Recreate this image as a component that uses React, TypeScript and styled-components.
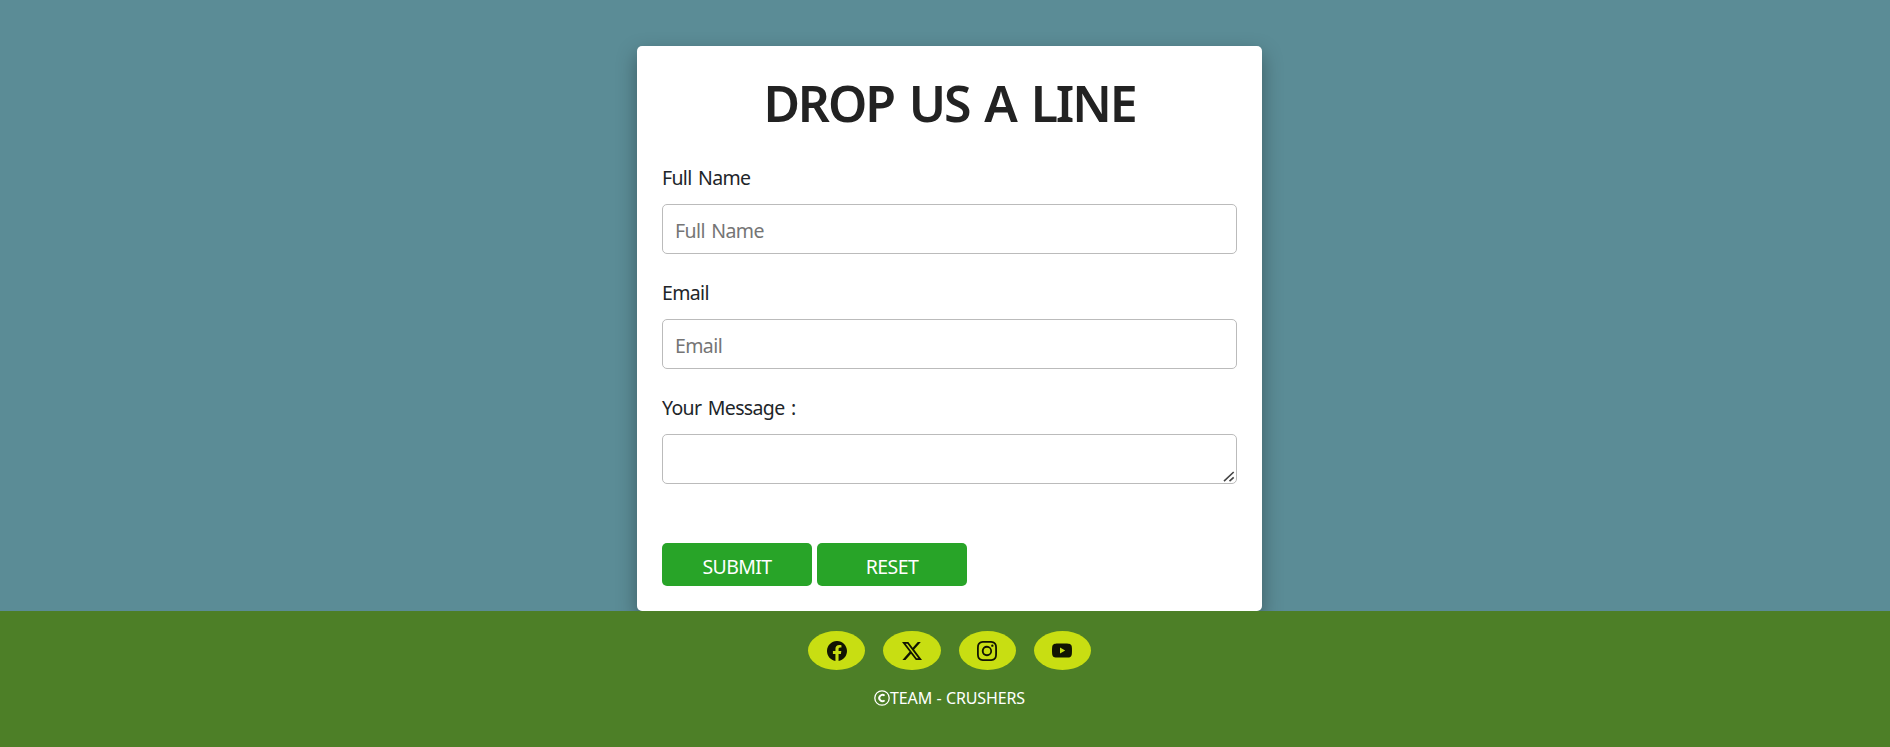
import React from "react";
import styled, { createGlobalStyle } from "styled-components";
import { BsFacebook, BsInstagram, BsTwitterX, BsYoutube } from "react-icons/bs";

const GlobalStyle = createGlobalStyle`
  *, *::before, *::after { box-sizing: border-box; }
  body {
    margin: 0;
    background: #5b8c96;
    color: #212529;
    font-family: "Segoe UI", "Noto Sans", "Open Sans", sans-serif;
  }
`;

const Page = styled.div`
  display: flex;
  flex-direction: column;
  height: 747px;
  overflow: hidden;
`;

const Main = styled.main`
  flex: 0 0 611px;
  display: flex;
  justify-content: center;
  padding: 46px 0 0 9px;
  overflow: hidden;
`;

const Card = styled.form`
  width: 625px;
  height: 565px;
  padding: 25px;
  background: #fff;
  border-radius: 5px;
  box-shadow: 0 8px 20px rgba(0, 0, 0, 0.35);
`;

const Title = styled.h1`
  margin: 0 0 20px;
  height: 65px;
  line-height: 64px;
  font-size: 50px;
  font-weight: 600;
  letter-spacing: -2.1px;
  word-spacing: 4px;
  text-align: center;
  color: #222;
  white-space: nowrap;
`;

const Field = styled.div`
  display: flex;
  flex-direction: column;
  height: 115px;
`;

const Label = styled.label`
  height: 48px;
  line-height: 44px;
  font-size: 19.5px;
  letter-spacing: -0.65px;
  word-spacing: 2px;
`;

const Input = styled.input`
  height: 50px;
  padding: 3px 12px 0 12px;
  border: 1px solid #bbb;
  border-radius: 5px;
  font: inherit;
  font-size: 19.5px;
  letter-spacing: -0.6px;
  word-spacing: 2px;
  outline: none;
  &::placeholder { color: #757575; opacity: 1; }
`;

const MessageBox = styled.div`
  position: relative;
  display: flex;
`;

const TextArea = styled.textarea`
  flex: 1;
  height: 50px;
  padding: 10px 12px;
  border: 1px solid #bbb;
  border-radius: 5px;
  font: inherit;
  font-size: 20px;
  resize: none;
  overflow: hidden;
  outline: none;
`;

const Grip = styled.svg`
  position: absolute;
  right: 2px;
  bottom: 2px;
  pointer-events: none;
`;

const Actions = styled.div`
  display: flex;
  gap: 5px;
  margin-top: 42px;
`;

const Button = styled.button`
  width: 150px;
  height: 43px;
  padding: 5px 0 0;
  border: 0;
  border-radius: 5px;
  background: #28a428;
  color: #fff;
  font: inherit;
  font-size: 19.5px;
  line-height: 30px;
  letter-spacing: -0.6px;
`;

const Footer = styled.footer`
  flex: 1;
  display: flex;
  flex-direction: column;
  align-items: center;
  padding: 20px 0 0 9px;
  background: #4d7f27;
  color: #fff;
`;

const Socials = styled.nav`
  display: flex;
  gap: 18px;
`;

const Social = styled.a`
  display: flex;
  align-items: center;
  justify-content: center;
  width: 57.3px;
  height: 39px;
  border-radius: 50%;
  background: #c8de12;
  color: #111402;
`;

const Credit = styled.p`
  display: flex;
  align-items: center;
  margin: 16px 0 0;
  height: 24px;
  font-size: 16px;
  line-height: 24px;
  letter-spacing: -0.15px;
  word-spacing: 0.5px;
`;

const fields = ["Full Name", "Email"];
const socials = [
  { name: "Facebook", Icon: BsFacebook },
  { name: "X", Icon: BsTwitterX },
  { name: "Instagram", Icon: BsInstagram },
  { name: "YouTube", Icon: BsYoutube },
];

export default function App() {
  return (
    <Page>
      <GlobalStyle />
      <Main>
        <Card>
          <Title>DROP US A LINE</Title>
          {fields.map((name) => (
            <Field key={name}>
              <Label>{name}</Label>
              <Input placeholder={name} />
            </Field>
          ))}
          <Field>
            <Label>Your Message :</Label>
            <MessageBox>
              <TextArea />
              <Grip width="12" height="11" viewBox="0 0 12 11" fill="none" stroke="#444" strokeWidth="1.6">
                <path d="M1 10.2 10.7 1M6.5 10.2 10.7 6.3" />
              </Grip>
            </MessageBox>
          </Field>
          <Actions>
            <Button type="button">SUBMIT</Button>
            <Button type="reset">RESET</Button>
          </Actions>
        </Card>
      </Main>
      <Footer>
        <Socials>
          {socials.map(({ name, Icon }) => (
            <Social key={name} aria-label={name}>
              <Icon size={20} />
            </Social>
          ))}
        </Socials>
        <Credit>
          <svg width="16" height="16" viewBox="0 0 16 16" fill="none" stroke="currentColor">
            <circle cx="8" cy="8" r="7.2" strokeWidth="1.3" />
            <path d="M10.6 5.6A3.2 3.2 0 1 0 10.6 10.4" strokeWidth="1.9" />
          </svg>
          <span>TEAM - CRUSHERS</span>
        </Credit>
      </Footer>
    </Page>
  );
}
